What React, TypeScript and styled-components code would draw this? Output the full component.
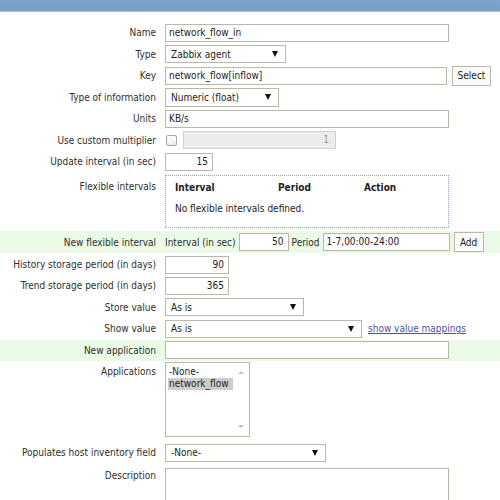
import React from "react";
import styled, { createGlobalStyle } from "styled-components";

const Global = createGlobalStyle`
  html, body { margin: 0; padding: 0; background: #fff; }
  body { font-family: "DejaVu Sans Condensed", "DejaVu Sans", sans-serif; font-size: 10px; color: #2e2e2e; }
  * { box-sizing: border-box; }
`;

const TopBar = styled.div`
  height: 12px;
  background: linear-gradient(#80a4c9, #789cc2);
  border-bottom: 1px solid #a9c0dc;
`;

const Form = styled.div`
  display: flex;
  flex-direction: column;
  padding-top: 10px;
`;

const Row = styled.div<{ $h?: number; $green?: boolean; $top?: boolean; $pt?: number }>`
  display: grid;
  grid-template-columns: 165px 1fr;
  height: ${(p) => p.$h ?? 21.5}px;
  align-items: ${(p) => (p.$top ? "start" : "center")};
  padding-top: ${(p) => p.$pt ?? 0}px;
  background: ${(p) => (p.$green ? "#ebfae6" : "transparent")};
`;

const Label = styled.div<{ $pt?: number }>`
  text-align: right;
  padding-right: 9px;
  padding-top: ${(p) => p.$pt ?? 0}px;
  white-space: nowrap;
`;

const Field = styled.div`
  display: flex;
  align-items: center;
  gap: 3px;
`;

const Input = styled.div<{ $w: number; $right?: boolean }>`
  width: ${(p) => p.$w}px;
  height: 18px;
  border: 1px solid #bcb8a7;
  padding: 0 4px 0 3px;
  line-height: 16px;
  color: #222;
  background: #fff;
  white-space: nowrap;
  overflow: hidden;
  text-align: ${(p) => (p.$right ? "right" : "left")};
`;

const Disabled = styled.div`
  width: 153px;
  height: 18px;
  border: 1px solid #d0d0d0;
  background: #ececec;
  color: #999;
  text-align: right;
  padding-right: 6px;
  line-height: 16px;
  margin-left: 3px;
`;

const Check = styled.div`
  width: 11px;
  height: 11px;
  border: 1px solid #a6a6a6;
  border-radius: 2px;
  background: linear-gradient(#fdfdfd, #ececec);
  margin-left: 1px;
`;

const SelectBox = styled.div<{ $w: number; $h?: number }>`
  width: ${(p) => p.$w}px;
  height: ${(p) => p.$h ?? 18}px;
  border: 1px solid #bcb8a7;
  background: #fff;
  display: flex;
  align-items: center;
  justify-content: space-between;
  padding: 0 7px 0 5px;
  color: #222;
`;

const Arrow = styled.span`
  width: 0;
  height: 0;
  border-left: 3.5px solid transparent;
  border-right: 3.5px solid transparent;
  border-top: 6px solid #111;
`;

const Button = styled.div<{ $w: number; $ml?: number }>`
  width: ${(p) => p.$w}px;
  height: 20px;
  margin-left: ${(p) => p.$ml ?? 0}px;
  border: 1px solid #bcb8a7;
  background: #fafafa;
  display: flex;
  align-items: center;
  justify-content: center;
  color: #222;
`;

const FlexBox = styled.div`
  width: 284px;
  height: 53px;
  border: 1px dotted #8fa8d3;
  padding: 6px 9px 0;
`;

const FlexHead = styled.div`
  display: grid;
  grid-template-columns: 103px 86px 1fr;
  font-weight: bold;
  color: #222;
  height: 16px;
`;

const FlexEmpty = styled.div`
  margin-top: 5px;
  color: #222;
`;

const Inline = styled.span`
  white-space: nowrap;
`;

const Link = styled.a`
  color: #4d50a6;
  text-decoration: underline;
  margin-left: 3px;
`;

const ListBox = styled.div`
  width: 85px;
  height: 75px;
  border: 1px solid #bcb8a7;
  position: relative;
  padding: 3px 0 0 2px;
  color: #222;
`;

const ListItem = styled.div<{ $sel?: boolean }>`
  width: 65px;
  height: 12px;
  line-height: 12px;
  padding-left: 1px;
  background: ${(p) => (p.$sel ? "#cdcdcd" : "transparent")};
`;

const ScrollArrow = styled.span<{ $up?: boolean }>`
  position: absolute;
  right: 5px;
  ${(p) => (p.$up ? "top: 8px;" : "bottom: 8px;")}
  width: 0;
  height: 0;
  border-left: 3px solid transparent;
  border-right: 3px solid transparent;
  ${(p) => (p.$up ? "border-bottom: 3px solid #c2c2c2;" : "border-top: 3px solid #c2c2c2;")}
`;

const TextArea = styled.div`
  width: 284px;
  height: 40px;
  border: 1px solid #bcb8a7;
  border-bottom: none;
`;

export default function App() {
  return (
    <>
      <Global />
      <TopBar />
      <Form>
        <Row>
          <Label>Name</Label>
          <Field><Input $w={284}>network_flow_in</Input></Field>
        </Row>
        <Row>
          <Label>Type</Label>
          <Field><SelectBox $w={121}>Zabbix agent<Arrow /></SelectBox></Field>
        </Row>
        <Row>
          <Label>Key</Label>
          <Field><Input $w={282}>network_flow[inflow]</Input><Button $w={39} $ml={2}>Select</Button></Field>
        </Row>
        <Row>
          <Label>Type of information</Label>
          <Field><SelectBox $w={114} $h={19}>Numeric (float)<Arrow /></SelectBox></Field>
        </Row>
        <Row>
          <Label>Units</Label>
          <Field><Input $w={284}>KB/s</Input></Field>
        </Row>
        <Row>
          <Label>Use custom multiplier</Label>
          <Field><Check /><Disabled>1</Disabled></Field>
        </Row>
        <Row>
          <Label>Update interval (in sec)</Label>
          <Field><Input $w={48} $right>15</Input></Field>
        </Row>
        <Row $h={58.5} $top $pt={2.5}>
          <Label $pt={6}>Flexible intervals</Label>
          <FlexBox>
            <FlexHead><span>Interval</span><span>Period</span><span>Action</span></FlexHead>
            <FlexEmpty>No flexible intervals defined.</FlexEmpty>
          </FlexBox>
        </Row>
        <Row $h={22} $green>
          <Label>New flexible interval</Label>
          <Field>
            <Inline>Interval (in sec)</Inline>
            <Input $w={50} $right>50</Input>
            <Inline>Period</Inline>
            <Input $w={127}>1-7,00:00-24:00</Input>
            <Button $w={30} $ml={1}>Add</Button>
          </Field>
        </Row>
        <Row $h={22} $pt={1}>
          <Label>History storage period (in days)</Label>
          <Field><Input $w={64} $right>90</Input></Field>
        </Row>
        <Row>
          <Label>Trend storage period (in days)</Label>
          <Field><Input $w={64} $right>365</Input></Field>
        </Row>
        <Row>
          <Label>Store value</Label>
          <Field><SelectBox $w={139}>As is<Arrow /></SelectBox></Field>
        </Row>
        <Row>
          <Label>Show value</Label>
          <Field><SelectBox $w={197}>As is<Arrow /></SelectBox><Link>show value mappings</Link></Field>
        </Row>
        <Row $h={21} $green>
          <Label>New application</Label>
          <Field><Input $w={284} /></Field>
        </Row>
        <Row $h={80} $top $pt={1}>
          <Label $pt={4}>Applications</Label>
          <ListBox>
            <ListItem>-None-</ListItem>
            <ListItem $sel>network_flow</ListItem>
            <ScrollArrow $up />
            <ScrollArrow />
          </ListBox>
        </Row>
        <Row $h={24}>
          <Label>Populates host inventory field</Label>
          <Field><SelectBox $w={161}>-None-<Arrow /></SelectBox></Field>
        </Row>
        <Row $h={40} $top $pt={3}>
          <Label $pt={2}>Description</Label>
          <TextArea />
        </Row>
      </Form>
    </>
  );
}
